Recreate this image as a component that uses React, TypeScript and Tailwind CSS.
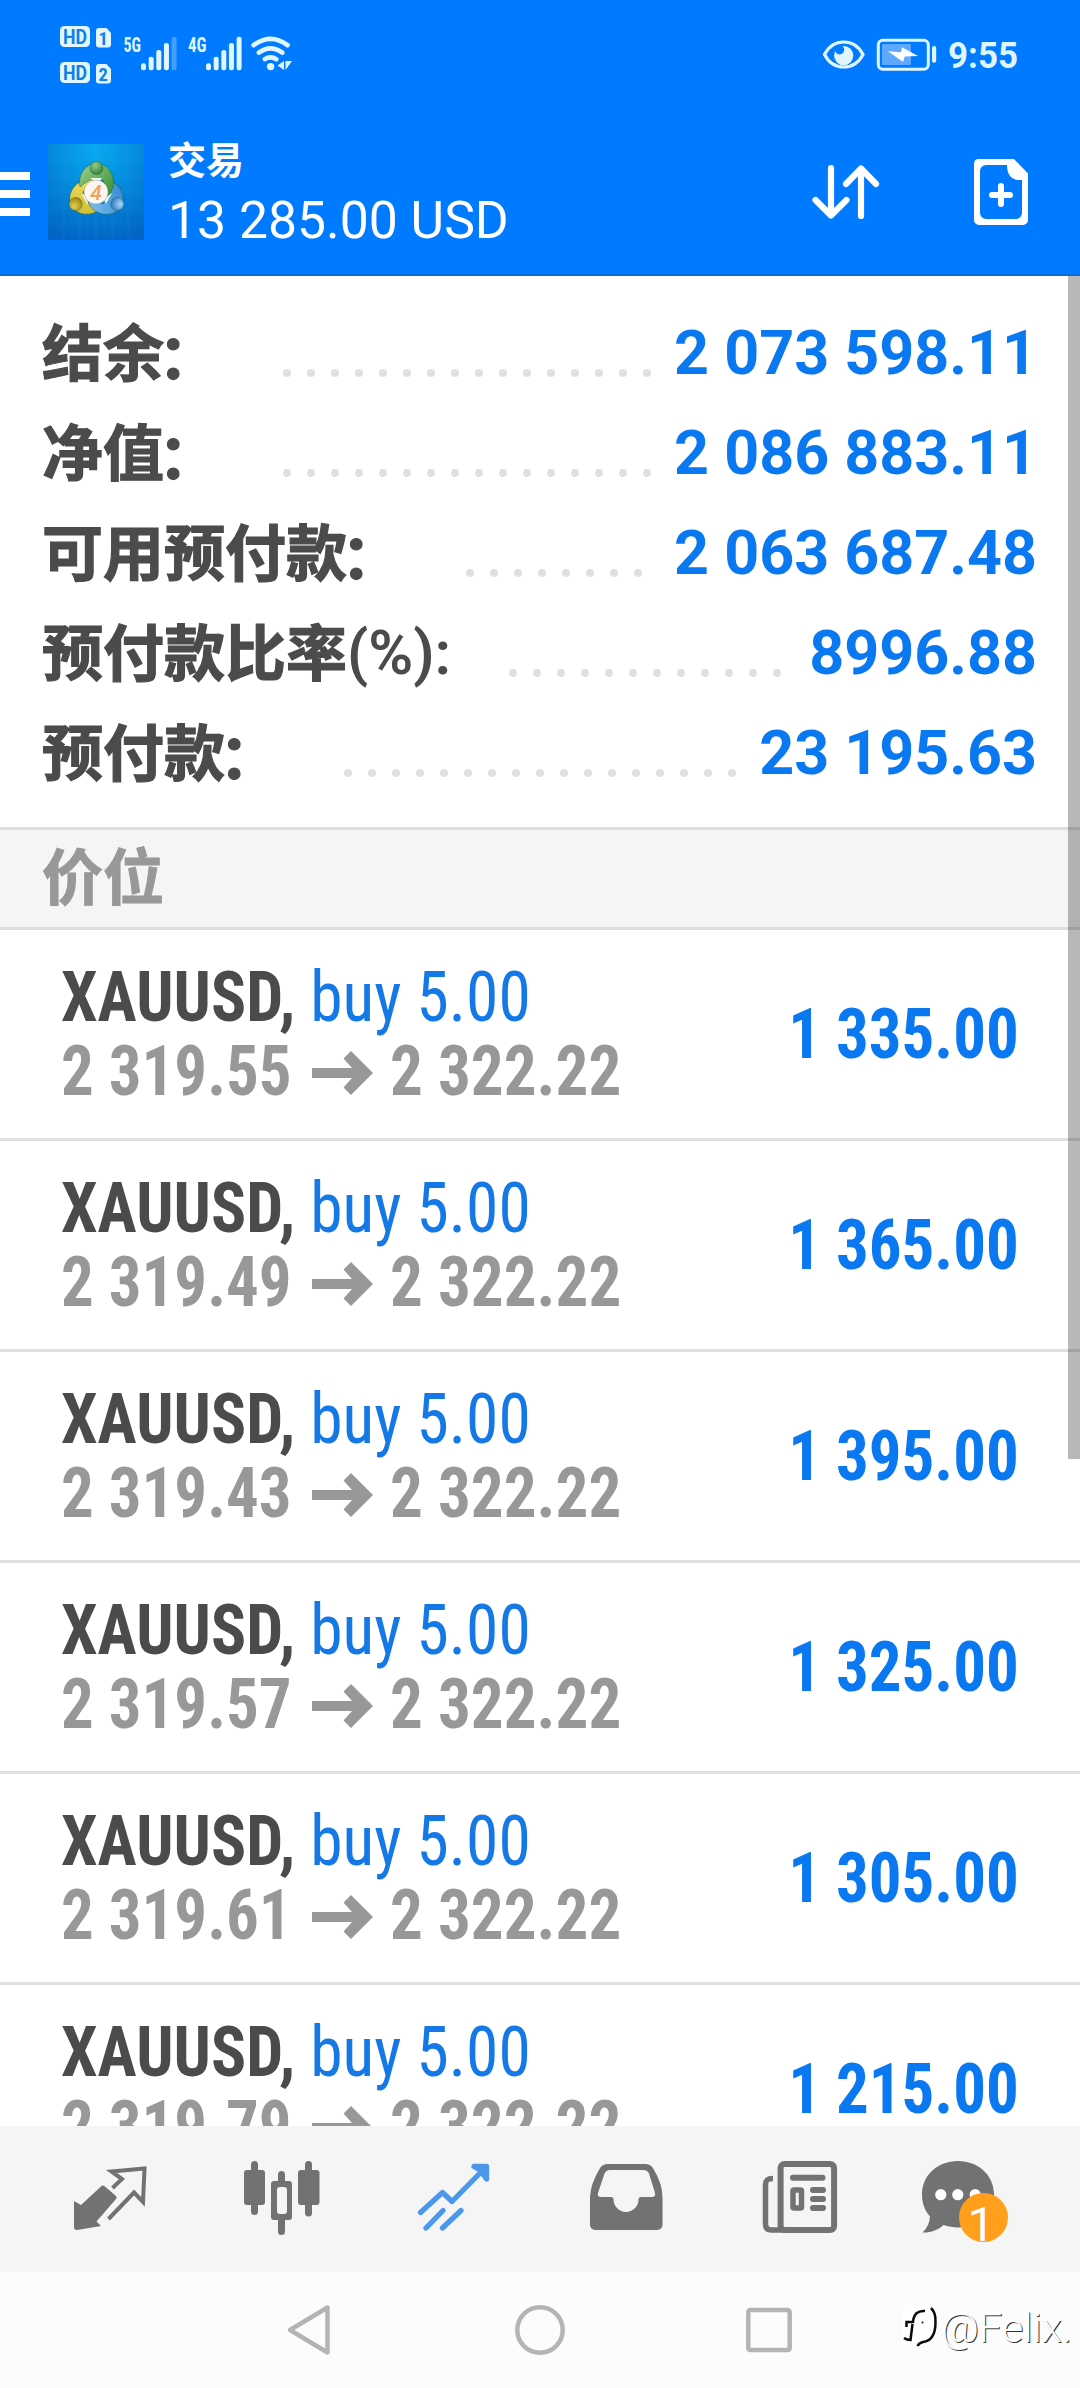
import React from "react";

const summary = [
  { label: "结余", suffix: "：", value: "2 073 598.11", dots: 16 },
  { label: "净值", suffix: "：", value: "2 086 883.11", dots: 16 },
  { label: "可用预付款", suffix: "：", value: "2 063 687.48", dots: 8 },
  { label: "预付款比率", suffix: "(%):", value: "8996.88", dots: 12 },
  { label: "预付款", suffix: "：", value: "23 195.63", dots: 17 },
];

const positions = [
  { open: "2 319.55", profit: "1 335.00" },
  { open: "2 319.49", profit: "1 365.00" },
  { open: "2 319.43", profit: "1 395.00" },
  { open: "2 319.57", profit: "1 325.00" },
  { open: "2 319.61", profit: "1 305.00" },
  { open: "2 319.79", profit: "1 215.00" },
];

function Bars({ x, last }: { x: number; last: number }) {
  const tops = [63.3, 56.7, 50, 43, 36.7];
  return (
    <g fill="#dff6ff">
      {tops.map((t, i) => (
        <rect key={t} x={x + i * 7.65} y={t} width="5" height={70.2 - t} rx="2.2" opacity={i === 4 ? last : 1} />
      ))}
    </g>
  );
}

function HdBadge({ y, n }: { y: number; n: string }) {
  return (
    <g>
      <rect x="60" y={y} width="30" height="21" rx="4.5" fill="#dff6ff" />
      <text x="75" y={y + 17.6} textAnchor="middle" textLength="24" lengthAdjust="spacingAndGlyphs" fontFamily="Roboto" fontWeight="700" fontSize="20" fill="#1180e6">HD</text>
      <path d={`M99 ${y + 2}H106.5L111 ${y + 7}V${y + 18.5}a3 3 0 0 1-3 3H99a3 3 0 0 1-3-3V${y + 5}a3 3 0 0 1 3-3Z`} fill="#dff6ff" />
      <text x="103.3" y={y + 18.6} textAnchor="middle" fontFamily="'Roboto Condensed', Roboto" fontWeight="700" fontSize="18.5" fill="#1180e6">{n}</text>
    </g>
  );
}

function StatusLeft() {
  return (
    <svg className="ml-[56px] h-[72px] w-[240px]" viewBox="56 20 240 72">
      <HdBadge y={26} n="1" />
      <HdBadge y={62} n="2" />
      <g fontFamily="'Roboto Condensed', Roboto" fontWeight="700" fontSize="20.5" fill="#dff6ff">
        <text x="123.5" y="51.8" textLength="17.5" lengthAdjust="spacingAndGlyphs">5G</text>
        <text x="188" y="51.8" textLength="18.5" lengthAdjust="spacingAndGlyphs">4G</text>
      </g>
      <Bars x={141} last={0.3} />
      <Bars x={206} last={1} />
      <g fill="none" stroke="#dff6ff" strokeWidth="4.6" strokeLinecap="round">
        <path d="M253.6 45.2Q270.5 32.5 287.6 45.2" />
        <path d="M258.8 52.6Q270.5 44 282.4 52.6" />
        <path d="M264.8 59.2Q270.5 55.4 276.4 59.2" />
      </g>
      <circle cx="270.6" cy="66.6" r="3.7" fill="#dff6ff" />
      <path d="M284 61v9l-6.5-4.5ZM285.5 61h6.5l-6.5 9Z" fill="#dff6ff" />
    </svg>
  );
}

function StatusRight() {
  return (
    <svg className="mr-[51px] h-[56px] w-[210px]" viewBox="820 28 210 56">
      <path d="M825.5 54.5C834 37.8 855.5 37.8 864 54.5C855.5 71.2 834 71.2 825.5 54.5Z" fill="none" stroke="#dff6ff" strokeWidth="3.2" />
      <circle cx="844.7" cy="55.6" r="9.6" fill="#dff6ff" />
      <circle cx="840.6" cy="49.8" r="4.6" fill="#007aff" />
      <rect x="879.3" y="40.3" width="50" height="29" rx="4.5" fill="none" stroke="#dff6ff" strokeWidth="3" />
      <rect x="883" y="44" width="29" height="21" rx="1" fill="#5fa8ff" />
      <rect x="933" y="46" width="4.2" height="16.8" rx="1.8" fill="#dff6ff" />
      <path d="M889 51.3L902 52.3L903 47.3L919 56L905.8 56.5L904 62L889 51.3Z" fill="#fff" />
      <text x="949" y="68.4" textLength="70" lengthAdjust="spacingAndGlyphs" fontFamily="Roboto" fontWeight="700" fontSize="36.5" fill="#dff6ff">9:55</text>
    </svg>
  );
}

function AppLogo() {
  const body = (a: number, b: string) => (
    <g transform={`rotate(${a} 96.5 192)`}>
      <path d="M80 187A17 19 0 1 1 113 187Q110 199 100 198Q108 188 103 180L90 180Q83 184 80 187Z" fill={`url(#${b})`} stroke="#1c5a3a" strokeOpacity="0.45" strokeWidth="1" />
      <path d="M90 178L102 178L98 184Z" fill="#eafaf0" />
      <circle cx="96.5" cy="168" r="6.6" fill={`url(#${b}h)`} stroke="#1c5a3a" strokeOpacity="0.4" strokeWidth="0.8" />
    </g>
  );
  return (
    <svg className="mb-1 ml-[18px] size-24" viewBox="48 144 96 96">
      <defs>
        <radialGradient id="bg" cx="0.5" cy="0.05" r="1"><stop offset="0" stopColor="#07aaf0" /><stop offset="1" stopColor="#0264c4" /></radialGradient>
        <linearGradient id="g" x1="0" y1="0" x2="1" y2="1"><stop offset="0" stopColor="#9fd28a" /><stop offset="1" stopColor="#2f8a35" /></linearGradient>
        <radialGradient id="gh" cx="0.4" cy="0.3" r="0.8"><stop offset="0" stopColor="#93cf8b" /><stop offset="1" stopColor="#26762f" /></radialGradient>
        <linearGradient id="y" x1="0" y1="0" x2="1" y2="1"><stop offset="0" stopColor="#c9b52b" /><stop offset="1" stopColor="#f4e668" /></linearGradient>
        <radialGradient id="yh" cx="0.4" cy="0.3" r="0.8"><stop offset="0" stopColor="#e6d04c" /><stop offset="1" stopColor="#94790c" /></radialGradient>
        <linearGradient id="b" x1="0" y1="0" x2="1" y2="1"><stop offset="0" stopColor="#2a82cf" /><stop offset="1" stopColor="#85c6f2" /></linearGradient>
        <radialGradient id="bh" cx="0.4" cy="0.3" r="0.8"><stop offset="0" stopColor="#a4d8fa" /><stop offset="1" stopColor="#1d69b4" /></radialGradient>
      </defs>
      <rect x="48" y="144" width="96" height="96" fill="url(#bg)" />
      <path d="M48 160H144M48 176H144M48 192H144M48 208H144M48 224H144M64 144V240M80 144V240M96 144V240M112 144V240M128 144V240" stroke="#35b4e8" strokeOpacity="0.16" strokeWidth="1" />
      {body(240, "y")}
      {body(120, "b")}
      {body(0, "g")}
      <circle cx="96" cy="192" r="12" fill="#fbf6f2" stroke="#7a8a70" strokeOpacity="0.5" strokeWidth="0.8" />
      <text x="96" y="199.5" textAnchor="middle" fontFamily="Roboto" fontWeight="500" fontStyle="italic" fontSize="21" fill="#f3a25a">4</text>
    </svg>
  );
}

function Suffix({ text }: { text: string }) {
  return text === "：" ? (
    <span className="-translate-x-[6px] translate-y-[5px] [-webkit-text-stroke:1.2px_#4b4b4b]">{text}</span>
  ) : (
    <span className="w-[104px] font-semibold">{text}</span>
  );
}

function Dots({ count }: { count: number }) {
  return (
    <div className="ml-[58px] flex flex-1 gap-4 pt-[40px]">
      {Array.from({ length: count }, (_, i) => (
        <span key={i} className="size-2 shrink-0 rounded-full bg-[#e0e0e0]" />
      ))}
    </div>
  );
}

function ArrowRight() {
  return (
    <svg className="h-[46px] w-[61px] translate-y-[2px]" viewBox="312 1050 61 46">
      <path d="M312 1068H352L343.5 1058.5L351 1051L373 1073L351 1095L343.5 1087.5L352 1078H312Z" fill="#98989a" />
    </svg>
  );
}

export default function App() {
  return (
    <div lang="zh-CN" className="relative flex h-[2388px] w-[1080px] flex-col overflow-hidden bg-white font-['Roboto','Noto_Sans_CJK_SC',sans-serif]">
      <header className="h-[276px] shrink-0 border-b-2 border-[#0a6cd6] bg-[#007aff]">
        <div className="flex h-[112px] items-center justify-between">
          <StatusLeft />
          <StatusRight />
        </div>
        <div className="flex h-[164px] items-center">
          <div className="flex w-[30px] flex-col gap-[10px]">
            <span className="h-2 bg-white" />
            <span className="h-2 bg-white" />
            <span className="h-2 bg-white" />
          </div>
          <AppLogo />
          <div className="mb-[3px] ml-6 flex-1 text-white">
            <div className="text-[38px] leading-[56px] font-bold">交易</div>
            <div className="text-[51.7px] leading-[64px]">13 285.00 USD</div>
          </div>
          <svg className="h-[60px] w-[76px]" viewBox="808 164 76 60" fill="none" stroke="#fff" strokeWidth="6.2" strokeLinecap="round" strokeLinejoin="round">
            <path d="M831 168V215M815.5 200L831 215.5L846.5 200" />
            <path d="M861 216V168.5M846 184L861 168.5L876 184" />
          </svg>
          <svg className="mr-[49px] ml-[87px] h-[70px] w-[60px]" viewBox="972 159 60 70">
            <path d="M979 159H1015L1029 173.5V220a5 5 0 0 1-5 5H980a5 5 0 0 1-5-5V164a5 5 0 0 1 4-5ZM987 165a6 6 0 0 0-6 6V213a6 6 0 0 0 6 6H1017a6 6 0 0 0 6-6V180H1018Q1008 178 1008 165Z" fill="#fff" fillRule="evenodd" />
            <path d="M993 195H1011M1002 186V204" stroke="#fff" strokeWidth="6" strokeLinecap="round" />
          </svg>
        </div>
      </header>

      <main className="relative h-[1850px] shrink-0 overflow-hidden">
        <section className="h-[554px] border-b-[3px] border-[#dedede] pt-[27px] pr-[43px] pl-[42px]">
          {summary.map((r) => (
            <div key={r.label} className="flex h-[100px] items-center text-[61px] leading-[100px] font-bold whitespace-pre">
              <span className="flex text-[#4b4b4b]">
                <span className="translate-y-[2px] [-webkit-text-stroke:1.2px_#4b4b4b]">{r.label}</span>
                <Suffix text={r.suffix} />
              </span>
              <Dots count={r.dots} />
              <span className="text-[#0a78f0]">{r.value}</span>
            </div>
          ))}
        </section>
        <div className="h-[100px] border-b-[3px] border-[#dedede] bg-[#f5f5f5] pl-[42px] text-[61px] leading-[99px] font-bold text-[#98989a] [-webkit-text-stroke:1px_#98989a]">价位</div>
        {positions.map((p) => (
          <div key={p.open} className="flex h-[211px] items-center justify-between border-b-[3px] border-[#e0e0e0] pr-[61px] pl-[61px] font-['Roboto_Condensed','Roboto'] text-[70px] leading-[74px] whitespace-pre">
            <div>
              <div className="origin-left scale-x-[0.935]">
                <span className="font-bold text-[#4b4b4b]">XAUUSD,</span>
                <span className="text-[#1478e6]"> buy 5.00</span>
              </div>
              <div className="flex items-center font-bold text-[#98989a]">
                <span className="w-[251px] origin-left scale-x-[0.927]">{p.open}</span>
                <ArrowRight />
                <span className="ml-[17px] origin-left scale-x-[0.93]">2 322.22</span>
              </div>
            </div>
            <div className="origin-right scale-x-[0.927] font-bold text-[#0a78f0]">{p.profit}</div>
          </div>
        ))}
        <div className="absolute top-0 right-0 h-[1183px] w-3 bg-black/28" />
      </main>

      <nav className="grid h-[146px] shrink-0 grid-cols-6 bg-[#f5f5f5] px-[21px]">
        <svg className="h-[146px] w-[173px]" viewBox="21 2126 173 146">
          <path d="M74 2201L81 2205L101 2186.5Q103 2184.5 105 2186.5L116 2196Q117.5 2197.5 116 2199L96.5 2221.5L101 2226L77 2230Q74 2230 74 2227Z" fill="#727272" />
          <path d="M112.5 2188L122 2179L111.5 2171.5L144.5 2168.5L143 2202L134 2192.5L108.5 2219" fill="none" stroke="#727272" strokeWidth="4" />
        </svg>
        <svg className="h-[146px] w-[173px]" viewBox="194 2126 173 146" fill="#727272">
          <rect x="244" y="2170" width="21" height="35" rx="3" />
          <rect x="251" y="2161" width="7" height="54" rx="3.5" />
          <rect x="298" y="2170" width="21.5" height="35" rx="3" />
          <rect x="305" y="2161" width="7" height="55.5" rx="3.5" />
          <path d="M278 2181V2174.5a3.5 3.5 0 0 1 7 0V2181H289a3 3 0 0 1 3 3V2217a3 3 0 0 1-3 3H285V2231.5a3.5 3.5 0 0 1-7 0V2220H274a3 3 0 0 1-3-3V2184a3 3 0 0 1 3-3ZM280 2187a3 3 0 0 0-3 3V2211a3 3 0 0 0 3 3H284a3 3 0 0 0 3-3V2190a3 3 0 0 0-3-3Z" fillRule="evenodd" />
        </svg>
        <svg className="h-[146px] w-[173px]" viewBox="367 2126 173 146" fill="none" stroke="#4a98ec" strokeWidth="5.3" strokeLinecap="round" strokeLinejoin="round">
          <path d="M420.5 2212.5L442.5 2192.5L452 2201.5L485 2168" />
          <path d="M474 2166.5H486.5V2179L480 2170Z" fill="#4a98ec" />
          <path d="M426 2228L443 2210.5M442.5 2228L461 2210.5" />
        </svg>
        <svg className="h-[146px] w-[173px]" viewBox="540 2126 173 146">
          <path d="M608 2164H645Q651 2164 653.5 2169Q662.5 2184 662.5 2197V2225a5 5 0 0 1-5 5H595a5 5 0 0 1-5-5V2197Q590.5 2184 599.5 2169Q602 2164 608 2164ZM610 2170Q606 2170 604.5 2173.5L598 2193Q597 2197 601 2197H611Q613.5 2197 613.5 2199.5A12.5 12.5 0 0 0 638.5 2199.5Q638.5 2197 641 2197H651.5Q656 2197 655 2193L649 2173.5Q647.5 2170 643.5 2170Z" fill="#727272" fillRule="evenodd" />
        </svg>
        <svg className="h-[146px] w-[173px]" viewBox="713 2126 173 146" fill="none" stroke="#727272" strokeWidth="6">
          <rect x="780.6" y="2164" width="53.5" height="66" rx="4" />
          <path d="M773 2178.5C767.5 2178.5 765.5 2180 765.5 2185V2224Q765.5 2230 771.5 2230H784" strokeWidth="5.5" />
          <path d="M793 2177.7H822.5M813 2190H823M813 2199H823M813 2208H823" strokeLinecap="round" />
          <rect x="793" y="2190" width="8.5" height="18" rx="1" strokeWidth="5.5" />
        </svg>
        <div className="relative">
          <svg className="h-[146px] w-[173px]" viewBox="886 2126 173 146">
            <path d="M958 2161C978 2161 994 2175 994 2194.5S978 2227.5 958 2227.5C953 2227.5 948 2226.5 943.5 2225C938 2230 930 2233 922.5 2232.5Q929.5 2226 930 2216.5C925 2211 922 2203.5 922 2194.5C922 2175 938 2161 958 2161Z" fill="#727272" />
            <circle cx="940.8" cy="2194.7" r="5.6" fill="#fff" />
            <circle cx="957.8" cy="2194.7" r="5.6" fill="#fff" />
            <circle cx="975.2" cy="2194.7" r="5.6" fill="#fff" />
          </svg>
          <span className="absolute top-[67px] left-[73px] flex size-[49px] justify-center overflow-hidden rounded-full bg-[#ff9f1c] pr-[5px] text-[49px] leading-[63px] text-white">1</span>
        </div>
      </nav>

      <footer className="flex h-[116px] shrink-0 justify-center bg-[#fcfcfc]">
        <svg className="h-[116px] w-[230px]" viewBox="195 2272 230 116" fill="none" stroke="#b4b4b4" strokeWidth="4.5" strokeLinejoin="round">
          <path d="M290 2330L327.5 2307.5V2352.5Z" />
        </svg>
        <svg className="h-[116px] w-[230px]" viewBox="425 2272 230 116" fill="none" stroke="#b4b4b4" strokeWidth="4.5">
          <circle cx="540" cy="2330" r="22.7" />
        </svg>
        <svg className="h-[116px] w-[230px]" viewBox="655 2272 230 116" fill="none" stroke="#b4b4b4" strokeWidth="4.5">
          <rect x="748.3" y="2310" width="41.4" height="40" rx="2" />
        </svg>
      </footer>

      <div className="absolute right-[8px] bottom-[36px] flex items-center">
        <svg className="h-[48px] w-[38px]" viewBox="904 2310 38 48" fill="none" stroke="#0a0a0a" strokeWidth="2.5">
          <rect x="901" y="2311" width="37" height="37" rx="10" fill="#fff" stroke="none" />
          <path d="M927 2317Q916 2316 915 2328H908.5V2333M914.5 2330L912.5 2346Q909 2346 906 2344" />
          <path d="M933 2314Q938 2319 937.5 2328C937.5 2340 934 2347 925 2348Q921 2349 919.5 2352" />
          <circle cx="924.5" cy="2328.5" r="1" fill="#0a0a0a" stroke="none" />
        </svg>
        <span className="ml-px text-[41.5px] leading-[48px] font-light text-white [text-shadow:1px_1px_0_#333]">@Felix.</span>
      </div>
    </div>
  );
}
